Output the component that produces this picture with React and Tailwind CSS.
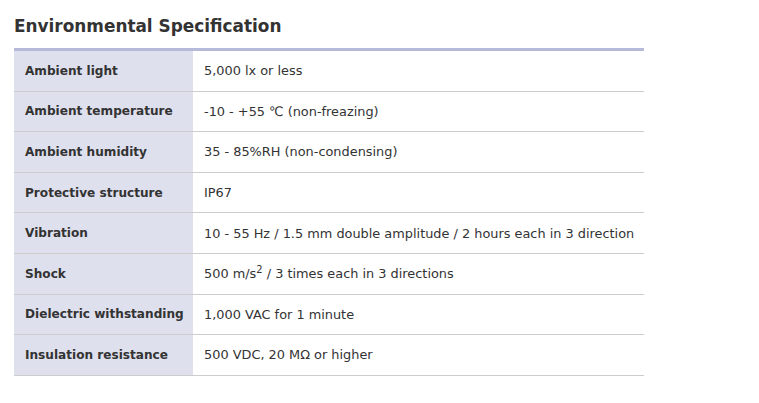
const rows = [
  ["Ambient light", "5,000 lx or less"],
  ["Ambient temperature", "-10 - +55 ℃ (non-freazing)"],
  ["Ambient humidity", "35 - 85%RH (non-condensing)"],
  ["Protective structure", "IP67"],
  ["Vibration", "10 - 55 Hz / 1.5 mm double amplitude / 2 hours each in 3 direction"],
  ["Shock", "shock"],
  ["Dielectric withstanding", "1,000 VAC for 1 minute"],
  ["Insulation resistance", "500 VDC, 20 MΩ or higher"],
];

export default function App() {
  return (
    <div className="w-[759px] h-[403px] bg-white px-[14px] pt-[14px] text-[#333] font-['DejaVu_Sans',sans-serif]">
      <h2 className="text-[16.9px] leading-[24px] font-bold text-[#333]">Environmental Specification</h2>
      <div className="mt-[10px] w-[630px] border-t-[3px] border-[#b5b9da]">
        {rows.map(([label, value]) => (
          <div key={label} className="flex h-[40.6px] border-b border-[#cccccc]">
            <div className="w-[179px] shrink-0 bg-[#dfe0ee] pl-[11px] flex items-center font-bold text-[12.1px] whitespace-nowrap">
              {label}
            </div>
            <div className="pl-[11px] flex items-center whitespace-nowrap text-[12.88px]">
              {value === "shock" ? (
                <span>
                  500 m/s<sup className="text-[10px]">2</sup> / 3 times each in 3 directions
                </span>
              ) : (
                value
              )}
            </div>
          </div>
        ))}
      </div>
    </div>
  );
}
